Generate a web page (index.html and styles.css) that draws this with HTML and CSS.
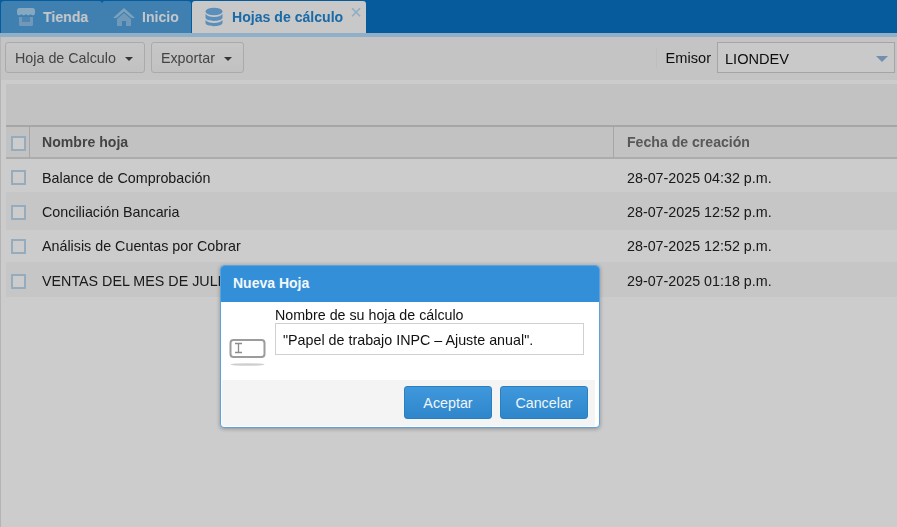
FILE: index.html
```html
<!DOCTYPE html>
<html lang="es">
<head>
<meta charset="utf-8">
<title>Hojas de cálculo</title>
<link rel="stylesheet" href="styles.css">
</head>
<body>
<div class="app">
  <nav class="tabbar">
    <div class="tab">
      <svg class="tab-icon" width="20" height="20" viewBox="0 0 20 20"><path d="M3.500 1h13C18.100 1 19 2 19 3.500V6c0 1.500-1 2.300-2.100 2.300-1 0-1.800-.5-2.200-1.300-.5.800-1.300 1.300-2.300 1.300S10.500 7.800 10 7c-.5.800-1.400 1.300-2.400 1.300S5.800 7.800 5.300 7c-.4.800-1.200 1.300-2.200 1.300C2 8.300 1 7.500 1 6V3.500C1 2 1.900 1 3.500 1z" fill="#a8d2f0"/><path d="M3 10h14v7.500a1.500 1.500 0 0 1-1.500 1.500h-11A1.500 1.500 0 0 1 3 17.500z" fill="#8cc0e8"/><path d="M6 10v5h8v-5z" fill="#64a8dc"/></svg>
      <span>Tienda</span>
    </div>
    <div class="tab">
      <svg class="tab-icon" width="22" height="20" viewBox="0 0 22 20"><path d="M11 1 0 11h3.500L11 4.500 18.500 11H22z" fill="#9ccbed"/><path d="M4 12 11 6l7 6v7h-5v-5H9v5H4z" fill="#8cc0e8"/></svg>
      <span>Inicio</span>
    </div>
    <div class="tab tab-active">
      <svg class="tab-icon" width="18" height="20" viewBox="0 0 18 20"><ellipse cx="9" cy="4.500" rx="8.500" ry="3.800" fill="#72b3ea"/><path d="M.5 7c1.500 2 4.500 2.900 8.500 2.900S16 9 17.500 7v3.500c0 2-3.800 3.400-8.500 3.400S.5 12.500.5 10.500z" fill="#72b3ea"/><path d="M.5 13c1.500 2 4.500 2.900 8.500 2.900s7-.9 8.500-2.900v2.800c0 2-3.800 3.400-8.500 3.400S.5 17.800.5 15.800z" fill="#72b3ea"/></svg>
      <span>Hojas de cálculo</span>
      <span class="tab-close">×</span>
    </div>
  </nav>
  <div class="tabline"></div>
  <div class="toolbar">
    <button class="tool-btn">Hoja de Calculo <i class="caret"></i></button>
    <button class="tool-btn">Exportar <i class="caret"></i></button>
    <div class="emisor">
      <span class="emisor-label">Emisor</span>
      <div class="select"><span>LIONDEV</span><i class="select-caret"></i></div>
    </div>
  </div>
  <main class="grid">
    <div class="grid-top"></div>
    <div class="row head">
      <div class="cell-check"><span class="check"></span></div>
      <div class="cell-name">Nombre hoja</div>
      <div class="cell-date">Fecha de creación</div>
    </div>
    <div class="row r1">
      <div class="cell-check"><span class="check"></span></div>
      <div class="cell-name">Balance de Comprobación</div>
      <div class="cell-date">28-07-2025 04:32 p.m.</div>
    </div>
    <div class="row r2 alt">
      <div class="cell-check"><span class="check"></span></div>
      <div class="cell-name">Conciliación Bancaria</div>
      <div class="cell-date">28-07-2025 12:52 p.m.</div>
    </div>
    <div class="row r3">
      <div class="cell-check"><span class="check"></span></div>
      <div class="cell-name">Análisis de Cuentas por Cobrar</div>
      <div class="cell-date">28-07-2025 12:52 p.m.</div>
    </div>
    <div class="row r4 alt">
      <div class="cell-check"><span class="check"></span></div>
      <div class="cell-name">VENTAS DEL MES DE JULIO</div>
      <div class="cell-date">29-07-2025 01:18 p.m.</div>
    </div>
  </main>
</div>
<div class="mask"></div>
<section class="dialog">
  <header class="dialog-head">Nueva Hoja</header>
  <div class="dialog-body">
    <div class="prompt-icon">
      <svg width="38" height="30" viewBox="0 0 38 30"><rect x="1.500" y="2" width="34" height="17" rx="3" fill="#fff" stroke="#9c9c9c" stroke-width="2"/><path d="M6 5.500h7M9.500 5.500v9M6 14.500h7" fill="none" stroke="#8c8c8c" stroke-width="1.300"/><ellipse cx="18.500" cy="26.500" rx="17" ry="1.300" fill="#cfcfcf"/></svg>
    </div>
    <div class="field">
      <label class="field-label">Nombre de su hoja de cálculo</label>
      <div class="field-input">"Papel de trabajo INPC – Ajuste anual".</div>
    </div>
  </div>
  <footer class="dialog-foot">
    <button class="dlg-btn">Aceptar</button>
    <button class="dlg-btn">Cancelar</button>
  </footer>
</section>
</body>
</html>
```
FILE: styles.css
```css
* { box-sizing: border-box; }
html, body { margin: 0; height: 100%; }
body {
  position: relative;
  width: 897px;
  height: 527px;
  overflow: hidden;
  background: #fff;
  font-family: "Liberation Sans", Arial, sans-serif;
  font-size: 14.3px;
  color: #222;
}
.app { display: flex; flex-direction: column; height: 527px; border-left: 1px solid #e2e2e2; filter: blur(.35px); }

.tabbar {
  display: flex;
  align-items: flex-end;
  height: 33px;
  margin-left: -1px;
  padding-left: 1px;
  background: #0772c4;
}
.tab {
  display: flex;
  align-items: center;
  height: 32px;
  padding: 0 13px 0 0;
  background: #50a0dc;
  color: #f2f8fd;
  font-weight: bold;
  font-size: 14.1px;
}
.tab:first-child { width: 101px; padding-left: 15px; border-radius: 3px 3px 0 0; }
.tab:nth-child(2) { width: 89px; padding-left: 11px; border-radius: 3px 3px 0 0; }
.tab-icon { flex: none; }
.tab:first-child .tab-icon { margin-right: 7px; }
.tab:nth-child(2) .tab-icon { margin-right: 7px; }
.tab-active {
  position: relative;
  width: 174px;
  padding-left: 13px;
  margin-left: 1px;
  background: #fafafa;
  color: #2085d2;
  border-radius: 3px 3px 0 0;
}
.tab-active .tab-icon { margin-right: 9px; }
.tab-close {
  position: absolute;
  right: 4px;
  top: 0;
  font-size: 20px;
  font-weight: normal;
  line-height: 22px;
  color: #b0d8f5;
}
.tabline { height: 4px; background: #b3dcfb; margin-left: -1px; }

.toolbar {
  display: flex;
  align-items: center;
  height: 43px;
  padding: 0 2px 2px 4px;
  gap: 6px;
  background: #f6f6f6;
}
.tool-btn {
  height: 31px;
  padding: 0 11px 0 9px;
  border: 1px solid #d5d5d5;
  border-radius: 3px;
  background: linear-gradient(#f9f9f9, #f2f2f2);
  color: #555;
  font: 14.3px "Liberation Sans", Arial, sans-serif;
}
.caret {
  display: inline-block;
  width: 0;
  height: 0;
  margin-left: 5px;
  vertical-align: 2px;
  border: 4px solid transparent;
  border-top: 4px solid #444;
  border-bottom: 0;
}
.emisor { display: flex; align-items: center; margin-left: auto; }
.emisor-label { color: #111; margin-right: 6px; padding-left: 9px; border-left: 1px solid #eee; line-height: 20px; font-size: 14.6px; }
.select {
  display: flex;
  align-items: center;
  justify-content: space-between;
  width: 178px;
  height: 31px;
  padding: 2px 6px 0 7px;
  border: 1px solid #cfcfcf;
  background: #fcfcfc;
  color: #111;
  font-size: 14.6px;
}
.select-caret {
  width: 0;
  height: 0;
  border: 6px solid transparent;
  border-top: 6px solid #8db4d6;
  border-bottom: 0;
}

.grid { flex: 1; margin: 4px 0 0 5px; background: #fff; }
.grid-top { height: 43px; background: #f3f3f3; border-bottom: 2px solid #d0d0d0; }
.row { display: flex; align-items: center; }
.head {
  height: 32px;
  background: #f3f3f3;
  border-bottom: 2px solid #d8d8d8;
  font-weight: bold;
  font-size: 14.1px;
  color: #666;
}
.head .cell-name { color: #555; }
.head .cell-date { color: #6e6e6e; border-left: 1px solid #d0d0d0; height: 100%; display: flex; align-items: center; padding-left: 13px; }
.head .cell-check { border-right: 1px solid #d0d0d0; height: 100%; display: flex; align-items: center; padding-top: 2px; }
.r1 { height: 33px; padding-top: 4px; }
.r2 { height: 38px; padding-top: 2px; }
.r3 { height: 32px; }
.r4 { height: 35px; padding-top: 3px; }
.alt { background: #f8f8f8; }
.cell-check { width: 24px; flex: none; padding-left: 5px; }
.check { display: block; width: 15px; height: 15px; border: 2px solid #bcd6ec; background: #fff; }
.cell-name { width: 583px; flex: none; padding-left: 12px; color: #222; }
.cell-date { flex: 1; padding-left: 14px; color: #222; }

.mask { position: absolute; inset: 0; background: rgba(0, 0, 0, .2); }

.dialog {
  position: absolute;
  left: 220px;
  top: 265px;
  width: 380px;
  height: 163px;
  display: flex;
  flex-direction: column;
  background: #fff;
  border: 1px solid #5aa3dd;
  border-radius: 4px;
  box-shadow: 0 1px 4px rgba(0, 0, 0, .3);
  overflow: hidden;
}
.dialog-head {
  height: 36px;
  padding: 0 12px;
  background: #338fd8;
  color: #f2f8fd;
  font-weight: bold;
  font-size: 14px;
  line-height: 35px;
}
.dialog-body { display: flex; flex: 1; padding: 5px 15px 0 8px; filter: blur(.3px); }
.prompt-icon { width: 46px; flex: none; padding-top: 31px; }
.field { flex: 1; display: flex; flex-direction: column; }
.field-label { color: #111; line-height: 16px; font-size: 14.25px; }
.field-input {
  height: 32px;
  padding: 0 7px;
  border: 1px solid #d0d0d0;
  line-height: 32px;
  color: #111;
}
.dialog-foot {
  display: flex;
  justify-content: flex-end;
  gap: 8px;
  height: 46px;
  margin: 0 4px 1px 1px;
  padding: 6px 7px 0 0;
  background: #f4f4f4;
}
.dlg-btn {
  width: 88px;
  height: 33px;
  border: 1px solid #2d80c0;
  border-radius: 3px;
  background: linear-gradient(#3f97dc, #2f86cb);
  color: #eef6fc;
  font: 14.3px "Liberation Sans", Arial, sans-serif;
}
```
